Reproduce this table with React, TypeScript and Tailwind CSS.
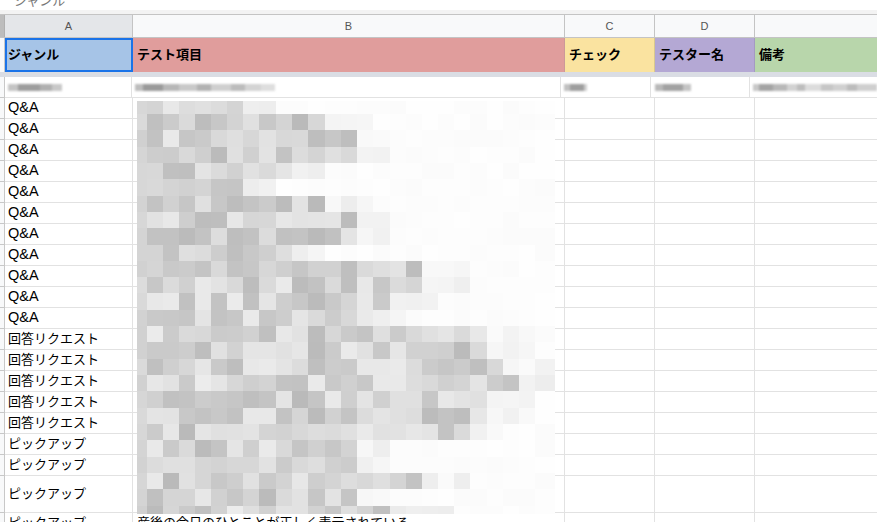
import React from "react";

const FONT = { fontFamily: '"Liberation Sans", "Noto Sans CJK JP", Arial, sans-serif' };

const XE = [137, 147, 163, 179, 195, 211, 227, 243, 259, 276, 292, 308, 325, 341, 357, 373, 390, 406, 422, 438, 454, 470, 487, 503, 519, 535, 555];
const YE = [101, 114, 130, 147, 163, 179, 196, 212, 228, 245, 261, 277, 293, 310, 326, 342, 359, 375, 391, 408, 424, 440, 457, 473, 489, 506, 514];
const EXT = [243, 325, 357, 357, 292, 243, 325, 357, 357, 292, 422, 422, 390, 373, 487, 487, 503, 519, 487, 487, 470, 357, 357, 422, 357, 407];

function makeRand(seed: number) {
  let s = seed;
  return () => {
    s = (s * 1103515245 + 12345) % 2147483648;
    return s / 2147483648;
  };
}

function Mosaic() {
  const rand = makeRand(42);
  const rects: React.ReactElement[] = [];
  for (let r = 0; r < YE.length - 1; r++) {
    for (let c = 0; c < XE.length - 1; c++) {
      let v: number;
      if (XE[c + 1] <= EXT[r]) {
        v = c === 0 ? 208 + rand() * 12 : 186 + rand() * 50;
      } else if (XE[c] < EXT[r] + 33) {
        v = 236 + rand() * 14;
      } else {
        v = 251 + rand() * 3;
      }
      const g = Math.round(v);
      rects.push(
        <rect
          key={`${r}-${c}`}
          x={XE[c]}
          y={YE[r]}
          width={XE[c + 1] - XE[c]}
          height={YE[r + 1] - YE[r]}
          fill={`rgb(${g},${g},${g})`}
        />
      );
    }
  }
  return (
    <svg className="absolute left-0 top-0 pointer-events-none" width={877} height={522} shapeRendering="crispEdges">
      {rects}
    </svg>
  );
}

function Blur({ segs }: { segs: [number, string][] }) {
  return (
    <div className="flex h-[7px] blur-[0.8px]">
      {segs.map(([w, c], i) => (
        <div key={i} style={{ width: w, background: c }} />
      ))}
    </div>
  );
}

const rowsA: string[] = [
  ...Array(11).fill("Q&A"),
  ...Array(5).fill("回答リクエスト"),
  "ピックアップ",
  "ピックアップ",
];

function DataRow({ a, b, h = "h-[21px]" }: { a: string; b?: string; h?: string }) {
  const cell = `border-r border-b border-[#e2e2e2] flex items-center ${h}`;
  return (
    <div className="flex">
      <div className={`w-[5px] ${h} bg-[#f8f9fa] border-r border-b border-[#c8c8c8]`} />
      <div className={`${cell} w-[128px] pl-[3px] ${a === "Q&A" ? "text-[14.5px]" : "text-[13px]"}`}>{a}</div>
      <div className={`${cell} w-[432px] pl-[4px] text-[13px]`}>{b ?? ""}</div>
      <div className={`${cell} w-[90px]`} />
      <div className={`${cell} w-[100px]`} />
      <div className={`border-b border-[#e2e2e2] ${h} flex-1`} />
    </div>
  );
}

export default function App() {
  return (
    <div className="relative w-[877px] h-[522px] overflow-hidden bg-white text-black" style={FONT}>
      {/* formula bar */}
      <div className="h-[10px] overflow-hidden bg-white pl-[14px]">
        <div className="text-[13px] leading-[13px] mt-[-6px] text-[#777]">ジャンル</div>
      </div>
      <div className="h-[4px] bg-[#f3f3f3]" />
      {/* column headers */}
      <div className="flex h-[24px] border-t border-b border-[#c4c4c4] text-[11px] text-[#555]">
        <div className="w-[5px] bg-[#bdbdbd] border-r border-[#b0b0b0]" />
        <div className="w-[128px] bg-[#e4e6e9] border-r border-[#c4c4c4] flex items-center justify-center">A</div>
        <div className="w-[432px] bg-[#f8f9fa] border-r border-[#c4c4c4] flex items-center justify-center">B</div>
        <div className="w-[90px] bg-[#f8f9fa] border-r border-[#c4c4c4] flex items-center justify-center">C</div>
        <div className="w-[100px] bg-[#f8f9fa] border-r border-[#c4c4c4] flex items-center justify-center">D</div>
        <div className="flex-1 bg-[#f8f9fa]" />
      </div>
      {/* header row */}
      <div className="flex h-[34px] text-[13px] font-bold">
        <div className="w-[5px] bg-[#f8f9fa] border-r border-[#c8c8c8]" />
        <div className="w-[128px] bg-[#a6c4e7] flex items-center pl-[3px] shadow-[inset_0_0_0_2px_#1a73e8]">ジャンル</div>
        <div className="w-[432px] bg-[#e09d9c] border-r border-[#c99] flex items-center pl-[4px]">テスト項目</div>
        <div className="w-[90px] bg-[#fae3a0] border-r border-[#d8c88f] flex items-center pl-[4px]">チェック</div>
        <div className="w-[100px] bg-[#b4a8d4] border-r border-[#a49ac2] flex items-center pl-[4px]">テスター名</div>
        <div className="flex-1 bg-[#b8d6ab] flex items-center pl-[4px]">備考</div>
      </div>
      <div className="h-[5px] bg-[#dadde4]" />
      {/* row 2 (blurred) */}
      <div className="flex h-[21px]">
        <div className="w-[5px] bg-[#f8f9fa] border-r border-b border-[#c8c8c8]" />
        <div className="w-[128px] border-r border-b border-[#e2e2e2] flex items-center pl-[3px]">
          <Blur segs={[[10, "#c4c4c4"], [22, "#9d9d9d"], [12, "#b0b0b0"], [10, "#c8c8c8"]]} />
        </div>
        <div className="w-[432px] border-r border-b border-[#e2e2e2] flex items-center pl-[3px]">
          <Blur
            segs={[
              [8, "#bdbdbd"],
              [20, "#9a9a9a"],
              [16, "#b7b7b7"],
              [18, "#c9c9c9"],
              [14, "#b2b2b2"],
              [20, "#cfcfcf"],
              [14, "#bcbcbc"],
              [16, "#d4d4d4"],
              [14, "#dedede"],
            ]}
          />
        </div>
        <div className="w-[90px] border-r border-b border-[#e2e2e2] flex items-center pl-[3px]">
          <Blur segs={[[6, "#c0c0c0"], [14, "#9e9e9e"], [3, "#cfcfcf"]]} />
        </div>
        <div className="w-[100px] border-r border-b border-[#e2e2e2] flex items-center pl-[4px]">
          <Blur segs={[[8, "#b8b8b8"], [20, "#a2a2a2"], [8, "#c4c4c4"]]} />
        </div>
        <div className="flex-1 border-b border-[#e2e2e2] flex items-center pl-[3px]">
          <Blur
            segs={[
              [6, "#c8c8c8"],
              [14, "#a4a4a4"],
              [14, "#b8b8b8"],
              [10, "#d2d2d2"],
              [8, "#bdbdbd"],
              [16, "#dcdcdc"],
              [12, "#c6c6c6"],
              [14, "#d0d0d0"],
              [10, "#bcbcbc"],
              [20, "#cfcfcf"],
            ]}
          />
        </div>
      </div>
      {rowsA.map((a, i) => (
        <DataRow key={i} a={a} />
      ))}
      <DataRow a="ピックアップ" h="h-[37px]" />
      <DataRow a="ピックアップ" b="産後の今日のひとことが正しく表示されている" />
      <Mosaic />
    </div>
  );
}
